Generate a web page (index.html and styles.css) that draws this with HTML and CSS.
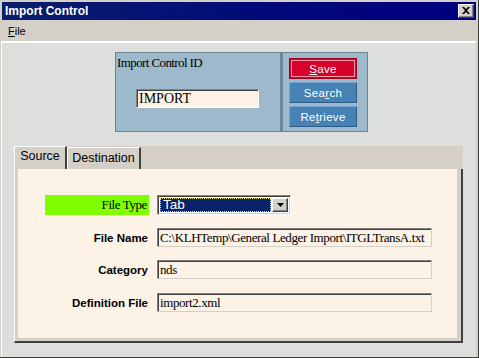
FILE: index.html
```html
<!DOCTYPE html>
<html lang="en">
<head>
  <meta charset="UTF-8" />
  <meta name="viewport" content="width=device-width, initial-scale=1.0" />
  <title>Import Control</title>
  <link rel="stylesheet" href="styles.css">
</head>
<body>
  <div class="window">
    <div class="titlebar">
      <span class="title">Import Control</span>
      <div class="close">
        <svg width="8" height="7" viewBox="0 0 8 7">
          <path d="M0 0h2l2 2 2-2h2L5 3.5 8 7H6L4 5 2 7H0l3-3.5z" fill="#000"/>
        </svg>
      </div>
    </div>
    <div class="menubar">
      <span class="menu-item"><u>F</u>ile</span>
    </div>

    <div class="client">
      <div class="header-panel">
        <div class="id-cell">
          <div class="id-label">Import Control ID</div>
          <div class="field id-input">IMPORT</div>
        </div>
        <div class="btn-cell">
          <div class="btn save"><u>S</u>ave</div>
          <div class="btn">Sea<u>r</u>ch</div>
          <div class="btn">Re<u>t</u>rieve</div>
        </div>
      </div>

      <div class="tabs">
        <div class="tab-strip">
          <div class="tab active">Source</div>
          <div class="tab">Destination</div>
        </div>
        <div class="tab-panel">
          <div class="tab-body">
            <div class="label green">File Type</div>
            <div class="select">
              <div class="select-value">Tab</div>
              <div class="select-btn">
                <svg width="7" height="4" viewBox="0 0 7 4"><path d="M0 0h7L3.5 4z" fill="#000"/></svg>
              </div>
            </div>

            <div class="label">File Name</div>
            <div class="field wide">C:\KLHTemp\General Ledger Import\ITGLTransA.txt</div>

            <div class="label">Category</div>
            <div class="field wide">nds</div>

            <div class="label">Definition File</div>
            <div class="field wide">import2.xml</div>
          </div>
        </div>
      </div>
    </div>
  </div>
</body>
</html>
```

FILE: styles.css
```css
body {
  margin: 0;
  font-family: "Liberation Sans", Arial, sans-serif;
}
.window {
  width: 479px;
  height: 358px;
  box-sizing: border-box;
  background: #d4d0c8;
  padding: 2px 2px 0 1px;
  border-right: 1px solid #404040;
  border-bottom: 1px solid #404040;
  display: flex;
  flex-direction: column;
}
.titlebar {
  height: 18px;
  margin-left: 1px;
  background: linear-gradient(to right, #0a1f6c, #00087a 60%, #000080);
  display: flex;
  align-items: center;
  justify-content: space-between;
  padding: 0 2px 0 3px;
}
.title {
  color: #fff;
  font-weight: bold;
  font-size: 12px;
}
.close {
  width: 16px;
  height: 14px;
  box-sizing: border-box;
  background: #d4d0c8;
  border: 1px solid;
  border-color: #fff #404040 #404040 #fff;
  box-shadow: inset -1px -1px 0 #808080;
  display: flex;
  align-items: center;
  justify-content: center;
  padding-bottom: 1px;
}
.menubar {
  height: 21px;
  display: flex;
  align-items: center;
  padding-left: 7px;
  font-size: 11px;
}
.client {
  flex: 1;
  background: #dcdfdb;
  border-top: 2px solid #fff;
  border-left: 1px solid #fff;
}
.header-panel {
  width: 253px;
  height: 80px;
  box-sizing: border-box;
  margin: 9px 0 0 113px;
  border: 1px solid #6a8494;
  background: #9eb9cc;
  display: flex;
}
.id-cell {
  width: 164px;
  border-right: 3px solid #6d8796;
}
.id-label {
  font-family: "Liberation Serif", "Times New Roman", serif;
  font-size: 13px;
  letter-spacing: -0.6px;
  line-height: 15px;
  padding: 2px 0 0 1px;
}
.field {
  box-sizing: border-box;
  height: 19px;
  background: #fcf2e6;
  border: 1px solid;
  border-color: #808080 #d4d0c8 #d4d0c8 #808080;
  box-shadow: inset 1px 1px 0 #404040;
  font-family: "Liberation Serif", "Times New Roman", serif;
  font-size: 13px;
  letter-spacing: -0.4px;
  line-height: 17px;
  padding-left: 2px;
  white-space: nowrap;
  overflow: hidden;
}
.id-input {
  width: 123px;
  margin: 19px 0 0 20px;
  border-color: #808080 #fff #fff #808080;
  font-size: 14px;
  letter-spacing: 0;
}
.btn-cell {
  padding: 5px 0 0 6px;
  display: flex;
  flex-direction: column;
  gap: 3px;
}
.btn {
  width: 68px;
  height: 21px;
  box-sizing: border-box;
  background: #4682b4;
  border: 1px solid;
  border-color: #74a4cf #2c5a84 #2c5a84 #74a4cf;
  color: #fff;
  font-size: 11.5px;
  letter-spacing: 0.3px;
  display: flex;
  align-items: center;
  justify-content: center;
}
.btn.save {
  background: #d6002a;
  border-color: #a0001c;
  box-shadow: inset 0 0 0 1px #d6002a, inset 0 0 0 2px #f29aaa;
}
.tabs {
  width: 449px;
  margin: 14px 0 0 12px;
}
.tab-strip {
  height: 23px;
  background: #d4d0c8;
  display: flex;
  align-items: flex-end;
}
.tab {
  width: 74px;
  height: 22px;
  box-sizing: border-box;
  border-top: 1px solid #fff;
  border-left: 1px solid #fff;
  border-right: 2px solid #404040;
  font-size: 12.5px;
  line-height: 21px;
  text-align: center;
}
.tab.active {
  width: 53px;
  height: 23px;
  line-height: 19px;
}
.tab-panel {
  height: 174px;
  box-sizing: border-box;
  background: #d4d0c8;
  border-left: 1px solid #fff;
  border-right: 2px solid #404040;
  border-bottom: 2px solid #404040;
  padding: 0 4px 3px 3px;
}
.tab-body {
  height: 100%;
  background: #fcf2e6;
  box-sizing: border-box;
  padding: 26px 0 0 27px;
  display: grid;
  grid-template-columns: 104px auto;
  grid-template-rows: 20px 19px 20px 19px;
  column-gap: 8px;
  row-gap: 13px;
  align-content: start;
  justify-content: start;
}
.label {
  font-size: 11.5px;
  font-weight: bold;
  text-align: right;
  padding-right: 1px;
  display: flex;
  align-items: center;
  justify-content: flex-end;
}
.label.green {
  background: #80ff00;
  font-weight: normal;
  font-family: "Liberation Serif", "Times New Roman", serif;
  font-size: 13px;
  letter-spacing: -0.4px;
  padding-right: 2px;
}
.wide {
  width: 275px;
}
.select {
  width: 134px;
  height: 20px;
  box-sizing: border-box;
  background: #fff;
  border: 1px solid;
  border-color: #808080 #fff #fff #808080;
  box-shadow: inset 1px 1px 0 #404040, inset -1px -1px 0 #d4d0c8;
  padding: 2px;
  display: flex;
}
.select-value {
  flex: 1;
  background: #0a246a;
  outline: 1px dotted #e8e070;
  outline-offset: -1px;
  color: #fff;
  font-size: 13.5px;
  line-height: 14px;
  padding-left: 3px;
  margin-right: 1px;
}
.select-btn {
  width: 16px;
  box-sizing: border-box;
  background: #d4d0c8;
  border: 1px solid;
  border-color: #fff #404040 #404040 #fff;
  box-shadow: inset -1px -1px 0 #808080;
  display: flex;
  align-items: center;
  justify-content: center;
}
```
